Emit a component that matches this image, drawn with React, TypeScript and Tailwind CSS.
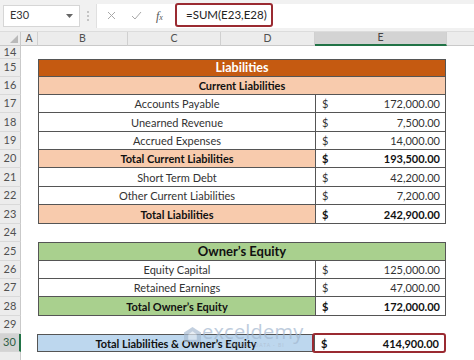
import React from "react";

type DataRow =
  | { kind: "title"; n: number; h: string; text: string; cls: string }
  | { kind: "item"; n: number; h: string; label: string; value: string; labelCls: string; bold?: boolean; first?: boolean }
  | { kind: "empty"; n: number; h: string };

const rows: DataRow[] = [
  { kind: "empty", n: 14, h: "h-[13px]" },
  { kind: "title", n: 15, h: "h-[18px]", text: "Liabilities", cls: "bg-[#c55a11] text-white text-[12.5px] font-bold border-t" },
  { kind: "title", n: 16, h: "h-[18px]", text: "Current Liabilities", cls: "bg-[#f8cbad] text-[#111] text-[11px] font-bold" },
  { kind: "item", n: 17, h: "h-[18px]", label: "Accounts Payable", value: "172,000.00", labelCls: "bg-white" },
  { kind: "item", n: 18, h: "h-[19px]", label: "Unearned Revenue", value: "7,500.00", labelCls: "bg-white" },
  { kind: "item", n: 19, h: "h-[18px]", label: "Accrued Expenses", value: "14,000.00", labelCls: "bg-white" },
  { kind: "item", n: 20, h: "h-[18px]", label: "Total Current Liabilities", value: "193,500.00", labelCls: "bg-[#f8cbad]", bold: true },
  { kind: "item", n: 21, h: "h-[19px]", label: "Short Term Debt", value: "42,200.00", labelCls: "bg-white" },
  { kind: "item", n: 22, h: "h-[18px]", label: "Other Current Liabilities", value: "7,200.00", labelCls: "bg-white" },
  { kind: "item", n: 23, h: "h-[19px]", label: "Total Liabilities", value: "242,900.00", labelCls: "bg-[#f8cbad]", bold: true },
  { kind: "empty", n: 24, h: "h-[18px]" },
  { kind: "title", n: 25, h: "h-[19px]", text: "Owner\u2019s Equity", cls: "bg-[#a9d08e] text-[#111] text-[13px] font-bold border-t" },
  { kind: "item", n: 26, h: "h-[18px]", label: "Equity Capital", value: "125,000.00", labelCls: "bg-white" },
  { kind: "item", n: 27, h: "h-[18px]", label: "Retained Earnings", value: "47,000.00", labelCls: "bg-white" },
  { kind: "item", n: 28, h: "h-[19px]", label: "Total Owner\u2019s Equity", value: "172,000.00", labelCls: "bg-[#a9d08e]", bold: true },
  { kind: "empty", n: 29, h: "h-[18px]" },
];

function RowHead({ n, selected }: { n: number; selected?: boolean }) {
  return (
    <div
      className={
        selected
          ? "w-[21px] h-full shrink-0 bg-[#d3d3d3] border-r-2 border-r-[#217346] border-b border-b-[#d6d6d6] flex items-center justify-center text-[11px] text-[#2f5d44]"
          : "w-[21px] h-full shrink-0 bg-[#ececec] border-r border-r-[#c9c9c9] border-b border-b-[#d9d9d9] flex items-center justify-center text-[11px] text-[#505050]"
      }
    >
      {n}
    </div>
  );
}

function ColHead({ w, label, selected }: { w: string; label: string; selected?: boolean }) {
  return (
    <div
      className={
        (selected
          ? "bg-[#d3d3d3] border-b-2 border-b-[#217346] text-[#444] "
          : "bg-[#ececec] border-b border-b-[#c9c9c9] text-[#505050] ") +
        w +
        " h-full shrink-0 border-r border-r-[#d0d0d0] flex items-center justify-center text-[10.5px]"
      }
    >
      {label}
    </div>
  );
}

export default function App() {
  return (
    <div className="w-[474px] h-[360px] overflow-hidden bg-white relative font-['Lato','Noto_Sans',sans-serif] text-[#222]">
      {/* Formula bar */}
      <div className="h-[32px] bg-[#f1f1f1] flex items-center border-b border-b-[#dcdcdc]">
        <div className="ml-[3px] w-[77px] h-[22px] bg-white border border-[#d6d6d6] flex items-center justify-between pl-[6px] pr-[6px]">
          <span className="text-[11px] text-[#333]">E30</span>
          <svg width="7" height="4" viewBox="0 0 7 4">
            <polygon points="0,0 7,0 3.5,4" fill="#666" />
          </svg>
        </div>
        <div className="w-[16px] flex flex-col items-center gap-[2px]">
          <span className="w-[2px] h-[2px] bg-[#c4c4c4]" />
          <span className="w-[2px] h-[2px] bg-[#c4c4c4]" />
          <span className="w-[2px] h-[2px] bg-[#c4c4c4]" />
        </div>
        <div className="flex-1 h-[24px] flex items-center bg-white border-l border-[#e0e0e0]">
          <div className="w-[78px] flex items-center h-full">
            <svg className="ml-[10px]" width="9" height="9" viewBox="0 0 9 9">
              <path d="M1 1 L8 8 M8 1 L1 8" stroke="#a8a8a8" strokeWidth="1" />
            </svg>
            <svg className="ml-[15px]" width="11" height="9" viewBox="0 0 11 9">
              <path d="M1 5 L4 8 L10 1" stroke="#a8a8a8" strokeWidth="1" fill="none" />
            </svg>
            <span className="ml-[14px] font-['Liberation_Serif',serif] italic text-[12px] text-[#555] leading-none">
              f<span className="text-[8px]">x</span>
            </span>
          </div>
          <div className="relative h-full flex items-center">
            <div className="w-[98px] h-[24px] -mt-[1px] border-2 border-[#9a2a31] rounded-[3px] flex items-center pl-[9px] text-[11.5px] text-[#222]">
              =SUM(E23,E28)
            </div>
          </div>
        </div>
      </div>

      {/* Column headers */}
      <div className="h-[14px] flex">
        <div className="w-[21px] h-full shrink-0 bg-[#ececec] border-r border-r-[#c9c9c9] border-b border-b-[#c9c9c9] flex items-end justify-end pr-[2px] pb-[2px]">
          <svg width="8" height="8" viewBox="0 0 8 8">
            <polygon points="8,0 8,8 0,8" fill="#b9b9b9" />
          </svg>
        </div>
        <ColHead w="w-[17px]" label="A" />
        <ColHead w="w-[90px]" label="B" />
        <ColHead w="w-[93px]" label="C" />
        <ColHead w="w-[94px]" label="D" />
        <ColHead w="w-[132px]" label="E" selected />
        <div className="flex-1 h-full bg-[#ececec] border-b border-b-[#c9c9c9]" />
      </div>

      {/* Grid rows */}
      {rows.map((r) => (
        <div key={r.n} className={r.h + " flex"}>
          <RowHead n={r.n} />
          <div className="w-[17px] shrink-0" />
          {r.kind === "title" && (
            <div
              className={
                r.cls +
                " w-[408px] shrink-0 border-l border-r border-b border-[#555] flex items-center justify-center leading-none"
              }
            >
              {r.text}
            </div>
          )}
          {r.kind === "item" && (
            <div className="w-[408px] shrink-0 flex text-[11px] leading-none">
              <div
                className={
                  r.labelCls +
                  " w-[277px] shrink-0 border-l border-b border-[#555] flex items-center justify-center " +
                  (r.bold ? "font-bold text-[#111]" : "text-[#333]")
                }
              >
                {r.label}
              </div>
              <div
                className={
                  "flex-1 bg-white border-l border-r border-b border-[#555] flex items-center justify-between pl-[6px] pr-[5px] " +
                  (r.bold ? "font-bold text-[#111]" : "text-[#333]")
                }
              >
                <span>$</span>
                <span>{r.value}</span>
              </div>
            </div>
          )}
        </div>
      ))}

      {/* Row 30 */}
      <div className="h-[18px] flex">
        <RowHead n={30} selected />
        <div className="w-[16px] shrink-0" />
        <div className="w-[408px] shrink-0 flex text-[11px] leading-none font-bold text-[#111]">
          <div className="w-[277px] shrink-0 bg-[#bdd7ee] border-l border-t border-b border-[#555] flex items-center justify-center">
            Total Liabilities &amp; Owner{"\u2019"}s Equity
          </div>
          <div className="relative flex-1 bg-white border-l border-r border-t border-b border-[#555] flex items-center justify-between pl-[6px] pr-[5px]">
            <span>$</span>
            <span>414,900.00</span>
            <div className="absolute -left-[3px] -right-[2px] -top-[2px] -bottom-[2px] border-2 border-[#9a2a31] rounded-[3px]" />
          </div>
        </div>
      </div>

      {/* Row 31 (partial) */}
      <div className="h-[12px] flex">
        <div className="w-[21px] h-full shrink-0 bg-[#ececec] border-r border-r-[#c9c9c9]" />
      </div>

      {/* Watermark */}
      <div className="absolute left-[184px] top-[322px] flex items-start opacity-70 pointer-events-none">
        <svg width="17" height="15" viewBox="0 0 16 14" className="mt-[5px]">
          <polygon points="8,0 16,5 16,14 0,14 0,5" fill="#a9bcd2" />
          <polygon points="8,4 12,7 12,12 4,12 4,7" fill="#dfe7f0" />
        </svg>
        <div className="flex flex-col ml-[1px]">
          <span className="text-[20px] leading-[20px] text-[#a3b7cf] font-['Open_Sans',sans-serif] tracking-[0.2px]">
            exceldemy
          </span>
          <span className="text-[5px] leading-[6px] text-[#aebdd0] tracking-[1px] ml-[26px]">
            EXCEL · DATA · BI
          </span>
        </div>
      </div>
    </div>
  );
}
